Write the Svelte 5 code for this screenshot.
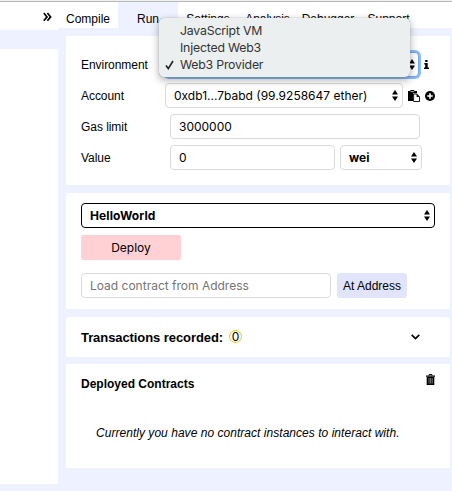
<script>
  const tabs = [
    { name: 'Compile', width: 60 },
    { name: 'Run', width: 60, active: true },
    { name: 'Settings', width: 60 },
    { name: 'Analysis', width: 59 },
    { name: 'Debugger', width: 62 },
    { name: 'Support', width: 59 }
  ];
  const environments = ['JavaScript VM', 'Injected Web3', 'Web3 Provider'];
  const selected = 'Web3 Provider';
</script>

{#snippet arrows()}
  <svg class="arrows" width="6" height="11" viewBox="0 0 6 11"><path d="M3 0 6 4.4H0zM0 6.6h6L3 11z" /></svg>
{/snippet}

<div class="app">
  <aside>
    <div class="toggle">
      <svg width="9" height="10" viewBox="0 0 9 10"><path d="M.8 1 4 4.9.8 8.8M4.4 1l3.2 3.9-3.2 3.9" fill="none" stroke="#000" stroke-width="1.7" /></svg>
    </div>
    <div class="side"></div>
  </aside>
  <main>
    <nav>
      {#each tabs as tab}
        <div class="tab" class:active={tab.active} style="width: {tab.width}px">{tab.name}</div>
      {/each}
    </nav>

    <section class="settings">
      <div class="row">
        <label for="env">Environment</label>
        <div class="env">
          <div class="box focus" id="env">{@render arrows()}</div>
          <div class="menu">
            {#each environments as env}
              <div class="option">
                {#if env === selected}
                  <svg class="check" width="9" height="10" viewBox="0 0 9 10"><path d="M1 5.5 3.3 8.6 8 1" fill="none" stroke="#222" stroke-width="1.6" /></svg>
                {/if}
                {env}
              </div>
            {/each}
          </div>
        </div>
        <svg class="info" width="5" height="9" viewBox="0 0 5 9"><path d="M1.2 0h2.3v2H1.2zM.3 3h3.4v4.6H5V9H0V7.6h1.2V4.4H.3z" /></svg>
      </div>
      <div class="row">
        <label for="account">Account</label>
        <div class="box account" id="account"><span>0xdb1...7babd (99.9258647 ether)</span>{@render arrows()}</div>
        <svg class="paste" width="12" height="12" viewBox="0 0 12 12"><path d="M0 1h2.3V0h4v1H9v2.3H5V11H0z" /><path d="M5.6 4h3.1l2.8 3v4.5H5.6z" fill="#fff" stroke="#000" stroke-width=".9" /><path d="M8.6 3.8v3.3h3z" /><path d="M2.5 1.6h3.8" stroke="#fff" stroke-width=".7" /></svg>
        <svg class="plus" width="10" height="10" viewBox="0 0 10 10"><circle cx="5" cy="5" r="5" /><path d="M5 2.2v5.6M2.2 5h5.6" stroke="#fff" stroke-width="1.6" /></svg>
      </div>
      <div class="row">
        <label for="gas">Gas limit</label>
        <div class="box gas" id="gas"><span>3000000</span></div>
      </div>
      <div class="row">
        <label for="value">Value</label>
        <div class="box value" id="value"><span>0</span></div>
        <div class="box unit"><b>wei</b>{@render arrows()}</div>
      </div>
    </section>

    <section class="contract">
      <div class="box name"><b>HelloWorld</b>{@render arrows()}</div>
      <div class="deploy"><span>Deploy</span></div>
      <div class="load">
        <div class="box address"><span>Load contract from Address</span></div>
        <div class="at">At Address</div>
      </div>
    </section>

    <section class="transactions">
      <strong>Transactions recorded:</strong>
      <span class="count">0</span>
      <svg class="chevron" width="9" height="6" viewBox="0 0 9 6"><path d="M.7.8 4.5 4.5 8.3.8" fill="none" stroke="#000" stroke-width="1.7" /></svg>
    </section>

    <section class="deployed">
      <div class="heading">
        <strong>Deployed Contracts</strong>
        <svg width="9" height="11" viewBox="0 0 9 11"><path d="M3 1.5V.6h3v.9" fill="none" stroke="#000" /><path d="M0 1.5h9v1.3H0zM.7 3h7.6v8H.7z" /><path d="M3 4v5.6M4.6 4v5.6M6.2 4v5.6" stroke="#aaa" stroke-width=".7" /></svg>
      </div>
      <em>Currently you have no contract instances to interact with.</em>
    </section>
  </main>
</div>

<style>
  .app {
    box-sizing: border-box;
    width: 452px;
    height: 491px;
    display: flex;
    overflow: hidden;
    border-top: 1px solid #f0f0f0;
    background: #eef1ff;
    color: #000;
    font: 12px/14px "Liberation Sans", Arial, sans-serif;
    box-shadow: inset 0 1px #b8b8b8;
    padding-top: 1px;
  }
  .app * { box-sizing: border-box; }
  svg { display: block; flex: none; }
  aside { width: 58px; flex: none; }
  .toggle { height: 28px; background: #fff; padding: 10px 0 0 43px; }
  .side { height: 435px; margin-top: 19px; background: #fff; }
  main { width: 394px; flex: none; }
  nav { display: flex; height: 26px; background: #fff; }
  .tab { text-align: center; padding-top: 10px; white-space: nowrap; flex: none; }
  .tab.active { background: #eef1ff; }
  section { width: 384px; margin-left: 8px; background: #fff; border-radius: 2px; }
  .settings { height: 149px; margin-top: 8px; padding: 16px 0 0 15px; }
  .row { display: flex; align-items: center; height: 25px; margin-bottom: 6px; }
  label { width: 84px; flex: none; letter-spacing: -.05px; }
  .box {
    height: 25px;
    border: 1px solid #dadada;
    border-radius: 4px;
    background: #fff;
    display: flex;
    align-items: center;
    justify-content: space-between;
    padding: 0 4px 0 8px;
    font-family: Inter, Roboto, sans-serif;
    white-space: nowrap;
    flex: none;
  }
  .arrows { margin-left: auto; }
  .env { position: relative; width: 254px; height: 25px; }
  .focus { border-color: #6fa8ee; box-shadow: 0 0 0 2px #8bbcf8; width: 254px; padding-right: 3px; }
  .menu {
    position: absolute;
    left: -6px;
    top: -34px;
    width: 251px;
    height: 59px;
    padding-top: 4px;
    border-radius: 5px;
    background: #ebefef;
    box-shadow: 0 0 1px #777, 0 3px 9px rgba(0, 0, 0, .32);
    font: 12.3px/17px Inter, Roboto, sans-serif;
    color: #333;
  }
  .option { position: relative; height: 17px; padding-left: 21px; letter-spacing: -.2px; white-space: nowrap; }
  .check { position: absolute; left: 6px; top: 4px; }
  .info { margin-left: 5px; }
  .account { width: 238px; }
  .paste { margin-left: 5px; }
  .plus { margin-left: 5px; }
  .gas { width: 250px; margin-left: 5px; }
  .value { width: 165px; margin-left: 5px; }
  .unit { width: 82px; margin-left: 5px; }
  b { font-weight: 700; }
  .contract { height: 116px; margin-top: 8px; padding: 10px 0 0 15px; }
  .name { width: 354px; border: 1px solid #000; }
  .name b { letter-spacing: .1px; }
  .deploy { width: 100px; height: 25px; margin-top: 7px; background: #ffd0d4; border-radius: 2px; display: flex; align-items: center; justify-content: center; font-family: Inter, Roboto, sans-serif; }
  .load { display: flex; margin-top: 13px; }
  .address { width: 250px; color: #757575; }
  .at { width: 70px; height: 25px; line-height: 26px; margin-left: 6px; text-align: center; background: #e2e4fb; border-radius: 3px; white-space: nowrap; }
  .transactions { height: 40px; margin-top: 8px; padding: 0 30px 0 15px; display: flex; align-items: center; }
  .transactions strong { font-size: 13px; letter-spacing: -.08px; white-space: nowrap; padding-top: 1px; }
  .count { width: 13px; height: 13px; margin: -1px 0 0 6px; border: 1px solid #e8c51c; border-radius: 50%; display: flex; align-items: center; justify-content: center; font-family: Inter, sans-serif; line-height: 11px; }
  .chevron { margin-left: auto; }
  .deployed { height: 104px; margin-top: 7px; padding: 13px 15px 0; border-radius: 2px 2px 0 0; }
  .heading { display: flex; justify-content: space-between; height: 14px; }
  .heading svg { margin-top: -3px; }
  em { display: block; margin: 35px 0 0 15px; white-space: nowrap; letter-spacing: .035px; }
</style>
